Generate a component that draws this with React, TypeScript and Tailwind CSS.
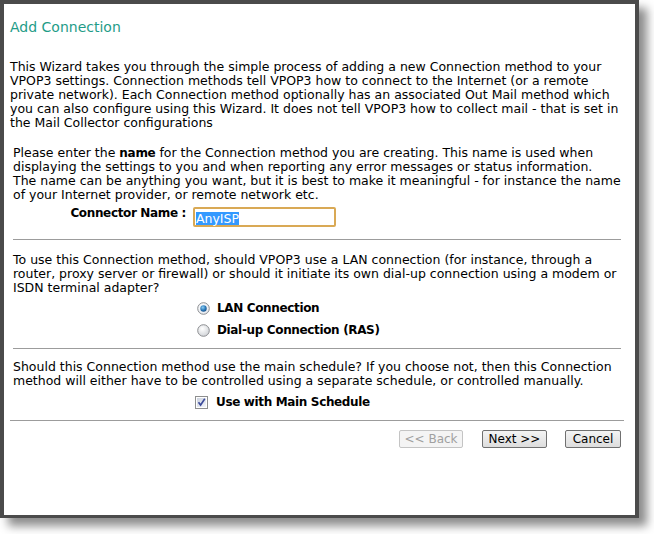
import React from "react";

const font = { fontFamily: '"DejaVu Sans", Verdana, sans-serif' };

const Radio = ({ checked }: { checked?: boolean }) => (
  <svg width="13" height="13" viewBox="0 0 13 13" className="shrink-0">
    <defs>
      <radialGradient id={checked ? "rOn" : "rOff"} cx="40%" cy="35%" r="70%">
        <stop offset="0%" stopColor="#ffffff" />
        <stop offset="100%" stopColor={checked ? "#e4e8ee" : "#cfd2d6"} />
      </radialGradient>
      <radialGradient id="dot" cx="40%" cy="35%" r="70%">
        <stop offset="0%" stopColor="#8fd0f5" />
        <stop offset="60%" stopColor="#2a78b8" />
        <stop offset="100%" stopColor="#164e86" />
      </radialGradient>
    </defs>
    <circle cx="6.5" cy="6.5" r="5.8" fill={`url(#${checked ? "rOn" : "rOff"})`} stroke="#8c8e91" strokeWidth="1" />
    {checked && <circle cx="6.5" cy="6.5" r="3.2" fill="url(#dot)" />}
  </svg>
);

const Checkbox = () => (
  <svg width="13" height="13" viewBox="0 0 13 13" className="shrink-0">
    <defs>
      <linearGradient id="cb" x1="0" y1="0" x2="1" y2="1">
        <stop offset="0%" stopColor="#cdd3df" />
        <stop offset="100%" stopColor="#f3f5fa" />
      </linearGradient>
    </defs>
    <rect x="0.5" y="0.5" width="12" height="12" fill="#ffffff" stroke="#8e8f8f" />
    <rect x="2" y="2" width="9" height="9" fill="url(#cb)" />
    <path d="M3.5 6.2 L5.6 9 L9.8 2.8" fill="none" stroke="#3b4a9a" strokeWidth="1.6" />
  </svg>
);

const Rule = ({ className }: { className?: string }) => (
  <div className={"h-px bg-[#9c9c9c] " + (className ?? "")} />
);

export default function App() {
  return (
    <div className="w-[654px] h-[534px] bg-white text-black" style={font}>
      <div className="w-[639px] h-[518px] border-4 border-b-[3px] border-[#4b4b4b] bg-white shadow-[8px_8px_9px_rgba(0,0,0,0.45)] flex flex-col pt-[15px] pl-[6px] pr-[11px]">
        <h1 className="text-[14px] leading-[16px] text-[#1f9c88]">Add Connection</h1>

        <p className="mt-[25px] text-[12.5px] leading-[14px] whitespace-nowrap">
          This Wizard takes you through the simple process of adding a new Connection method to your
          <br />
          VPOP3 settings. Connection methods tell VPOP3 how to connect to the Internet (or a remote
          <br />
          private network). Each Connection method optionally has an associated Out Mail method which
          <br />
          you can also configure using this Wizard. It does not tell VPOP3 how to collect mail - that is set in
          <br />
          the Mail Collector configurations
        </p>

        <div className="px-[3px] flex flex-col text-[12.5px] leading-[14px]">
          <p className="mt-[16px] whitespace-nowrap">
            Please enter the <b className="text-[12px] tracking-[-0.3px]">name</b> for the Connection method you are creating. This name is used when
            <br />
            displaying the settings to you and when reporting any error messages or status information.
            <br />
            The name can be anything you want, but it is best to make it meaningful - for instance the name
            <br />
            of your Internet provider, or remote network etc.
          </p>

          <div className="mt-[4px] flex items-start">
            <label className="w-[173px] text-right font-bold text-[12px] tracking-[-0.35px]">Connector Name :</label>
            <div className="ml-[7px] mt-[1px] w-[143px] h-[20px] border-2 border-[#d9a955] rounded-[2px] flex items-center pl-[1px] pt-[2px]">
              <span className="bg-[#3399ff] text-white leading-[13px]">AnyISP</span>
            </div>
          </div>

          <Rule className="mt-[12px]" />

          <p className="mt-[13px] whitespace-nowrap">
            To use this Connection method, should VPOP3 use a LAN connection (for instance, through a
            <br />
            router, proxy server or firewall) or should it initiate its own dial-up connection using a modem or
            <br />
            ISDN terminal adapter?
          </p>

          <div className="mt-[2px] flex flex-col pl-[184px] text-[12px] tracking-[-0.35px]">
            <div className="h-[22px] flex items-center gap-[7px]">
              <Radio checked />
              <span className="font-bold">LAN Connection</span>
            </div>
            <div className="h-[22px] flex items-center gap-[7px]">
              <Radio />
              <span className="font-bold">Dial-up Connection (RAS)</span>
            </div>
          </div>

          <Rule className="mt-[7px]" />

          <p className="mt-[11px] whitespace-nowrap">
            Should this Connection method use the main schedule? If you choose not, then this Connection
            <br />
            method will either have to be controlled using a separate schedule, or controlled manually.
          </p>

          <div className="mt-[7px] pl-[182px] flex items-center gap-[8px] text-[12px] tracking-[-0.35px]">
            <Checkbox />
            <span className="font-bold">Use with Main Schedule</span>
          </div>
        </div>

        <Rule className="mt-[11px]" />

        <div className="mt-[9px] pr-[3px] flex justify-end gap-[18px] text-[12px]">
          <button className="w-[64px] h-[18px] border border-[#c4c4c4] rounded-[2px] bg-[#f4f4f4] text-[#a0a0a0] leading-[16px]">
            &lt;&lt; Back
          </button>
          <button className="w-[65px] h-[18px] border border-[#707070] rounded-[2px] bg-gradient-to-b from-[#f4f4f4] to-[#dddddd] text-black leading-[16px] ml-px">
            Next &gt;&gt;
          </button>
          <button className="w-[56px] h-[18px] border border-[#707070] rounded-[2px] bg-gradient-to-b from-[#f4f4f4] to-[#dddddd] text-black leading-[16px]">
            Cancel
          </button>
        </div>
      </div>
    </div>
  );
}
